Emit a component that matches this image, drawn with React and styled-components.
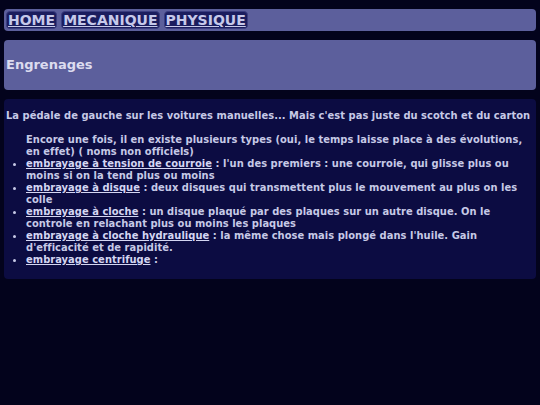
import React from "react";
import styled, { createGlobalStyle } from "styled-components";

const Global = createGlobalStyle`
  html, body { margin: 0; padding: 0; background: #03031c; }
  body { font-family: "DejaVu Sans", Verdana, sans-serif; }
`;

const Page = styled.div`
  padding: 9px 4px;
  display: flex;
  flex-direction: column;
  gap: 9px;
`;

const NavBar = styled.nav`
  background: #5c5f9c;
  border-radius: 4px;
  padding: 2px 2px;
  display: flex;
  gap: 4px;
`;

const NavLink = styled.a`
  display: block;
  background: #1b1d5e;
  border: 1px solid #3a3d80;
  border-radius: 4px;
  padding: 0 1px;
  color: #c6c9ea;
  font-weight: bold;
  font-size: 14px;
  line-height: 16px;
  text-decoration: underline;
`;

const Header = styled.header`
  background: #5c5f9c;
  border-radius: 4px;
  height: 50px;
  display: flex;
  align-items: center;
  padding: 0 2px;
`;

const Title = styled.h1`
  margin: 0;
  font-size: 13px;
  font-weight: bold;
  color: #dcdcef;
  transform: translateY(-1px);
`;

const Content = styled.section`
  background: #0c0c42;
  border-radius: 4px;
  padding: 11px 1px 13px 2px;
  color: #c6c9e6;
  font-family: "DejaVu Sans Condensed", "DejaVu Sans", sans-serif;
  font-size: 11px;
  letter-spacing: 0.05px;
  font-weight: bold;
  line-height: 12px;
`;

const Lead = styled.p`
  margin: 0 0 12px;
  white-space: nowrap;
`;

const Intro = styled.p`
  margin: 0 0 0 20px;
`;

const List = styled.ul`
  margin: 0;
  padding-left: 20px;
`;

const Item = styled.li`
  margin: 0;
`;

const Term = styled.a`
  color: #d4d6f2;
  text-decoration: underline;
`;

export default function App() {
  return (
    <>
      <Global />
      <Page>
        <NavBar>
          <NavLink>HOME</NavLink>
          <NavLink>MECANIQUE</NavLink>
          <NavLink>PHYSIQUE</NavLink>
        </NavBar>
        <Header>
          <Title>Engrenages</Title>
        </Header>
        <Content>
          <Lead>La pédale de gauche sur les voitures manuelles... Mais c'est pas juste du scotch et du carton</Lead>
          <Intro>
            Encore une fois, il en existe plusieurs types (oui, le temps laisse place à des évolutions, en effet) ( noms non officiels)
          </Intro>
          <List>
            <Item><Term>embrayage à tension de courroie</Term> : l'un des premiers : une courroie, qui glisse plus ou moins si on la tend plus ou moins</Item>
            <Item><Term>embrayage à disque</Term> : deux disques qui transmettent plus le mouvement au plus on les colle</Item>
            <Item><Term>embrayage à cloche</Term> : un disque plaqué par des plaques sur un autre disque. On le controle en relachant plus ou moins les plaques</Item>
            <Item><Term>embrayage à cloche hydraulique</Term> : la même chose mais plongé dans l'huile. Gain d'efficacité et de rapidité.</Item>
            <Item><Term>embrayage centrifuge</Term> :</Item>
          </List>
        </Content>
      </Page>
    </>
  );
}
